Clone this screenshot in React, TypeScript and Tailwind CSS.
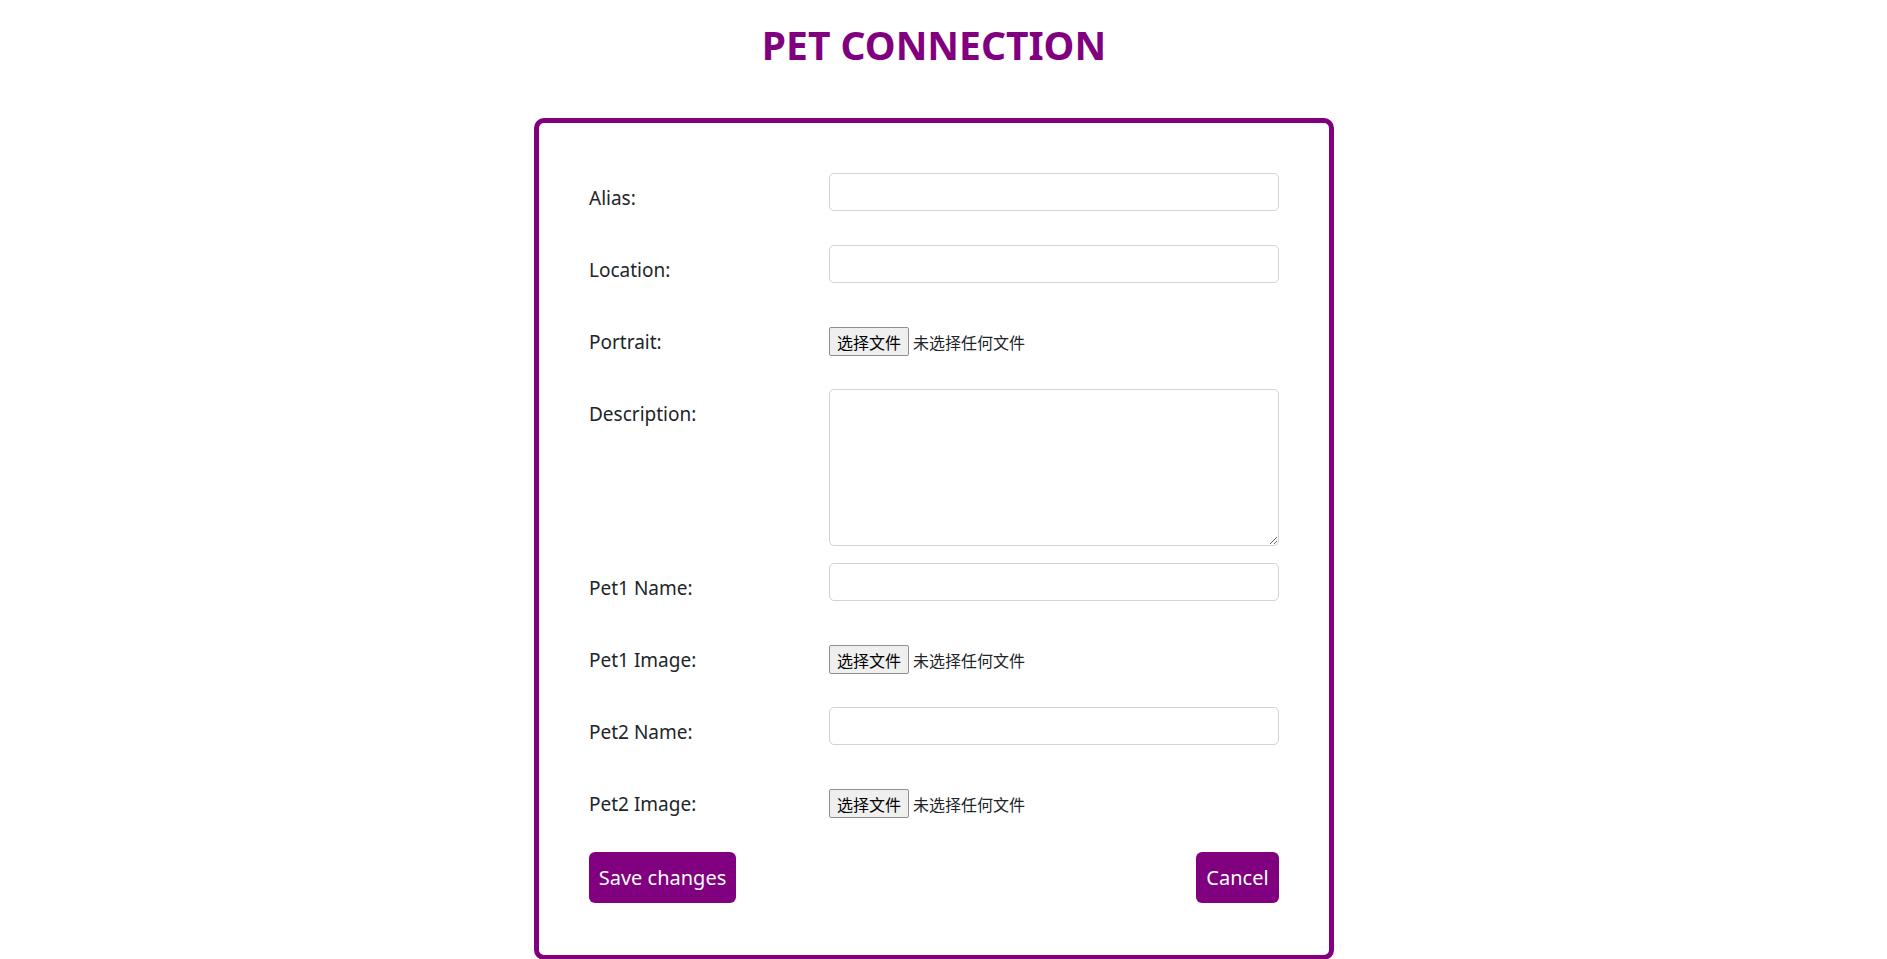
const labelCls = "pt-[10px] text-[19px] leading-[30px] text-[#212529]";
const inputCls = "block h-[38px] w-[450px] rounded-[5px] border border-[#ced4da] bg-white px-3 text-[20px] outline-none";

const TextRow = ({ label }: { label: string }) => (
  <div className="grid h-[72px] grid-cols-[240px_450px]">
    <label className={labelCls}>{label}</label>
    <input type="text" className={inputCls} />
  </div>
);

const FileRow = ({ label }: { label: string }) => (
  <div className="grid h-[72px] grid-cols-[240px_450px]">
    <label className={labelCls}>{label}</label>
    <div className="flex h-[39px] items-center gap-[4px] pt-[10px] font-['Noto_Sans_CJK_SC',sans-serif] text-[16px] leading-[20px] text-[#212529]">
      <span className="flex h-[29px] w-[80px] items-center justify-center rounded-[2px] border border-[#8f8f8f] bg-[#efefef] text-black">
        选择文件
      </span>
      <span>未选择任何文件</span>
    </div>
  </div>
);

export default function App() {
  return (
    <div className="min-h-screen bg-white pr-[19px] font-['Noto_Sans',sans-serif]">
      <h1 className="pt-[21px] text-center text-[39px] font-bold leading-[48px] text-[#800080]">
        PET CONNECTION
      </h1>
      <form className="mx-auto mt-[49px] w-[800px] rounded-[10px] border-[5px] border-[#800080] px-[50px] pt-[50px] pb-[52px]">
        <TextRow label="Alias:" />
        <TextRow label="Location:" />
        <FileRow label="Portrait:" />
        <div className="grid h-[174px] grid-cols-[240px_450px]">
          <label className={labelCls}>Description:</label>
          <textarea className="block h-[157px] w-[450px] rounded-[5px] border border-[#ced4da] bg-white px-3 py-2 text-[20px] outline-none" />
        </div>
        <TextRow label="Pet1 Name:" />
        <FileRow label="Pet1 Image:" />
        <TextRow label="Pet2 Name:" />
        <FileRow label="Pet2 Image:" />
        <div className="mt-px flex items-center justify-between">
          <button type="button" className="h-[51px] w-[147px] rounded-[6px] bg-[#800080] text-[20px] text-white">
            Save changes
          </button>
          <button type="button" className="h-[51px] w-[83px] rounded-[6px] bg-[#800080] text-[20px] text-white">
            Cancel
          </button>
        </div>
      </form>
    </div>
  );
}
